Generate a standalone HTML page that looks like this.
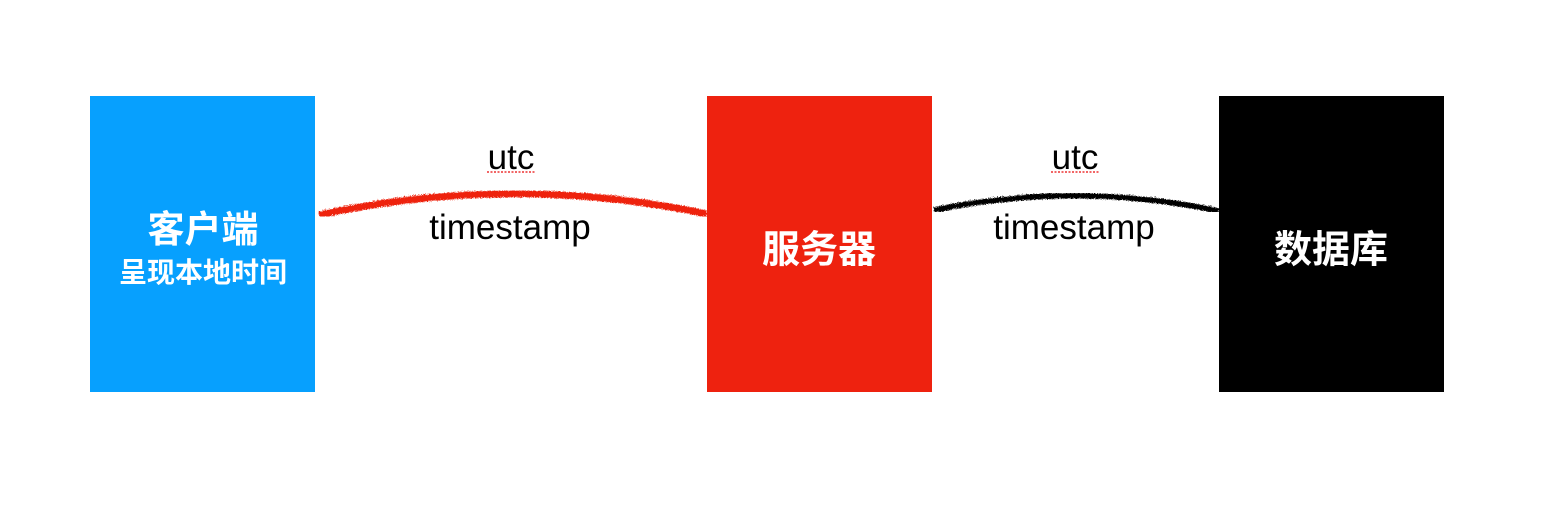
<!DOCTYPE html>
<html><head><meta charset="utf-8"><style>
body{margin:0;width:1542px;height:512px;background:#fff;position:relative;overflow:hidden;font-family:"Liberation Sans","Noto Sans CJK SC",sans-serif}
.b{position:absolute;top:96px;height:296px;width:225px}
.t{position:absolute;transform:translate(-50%,-50%);white-space:nowrap}
.w{color:#fff;font-weight:bold}
</style></head><body>
<div class="b" style="left:90px;background:#07a0fe"></div>
<div class="b" style="left:707px;background:#ee220f"></div>
<div class="b" style="left:1219px;background:#000"></div>
<svg style="position:absolute;left:0;top:0" width="1542" height="512">
<filter id="r"><feTurbulence baseFrequency="0.9" numOctaves="2" result="n"/><feDisplacementMap in="SourceGraphic" in2="n" scale="4"/></filter>
<path d="M318 214 Q510 172 706 213" stroke="#ee220f" stroke-width="7" fill="none" filter="url(#r)"/>
<path d="M933 209 Q1075 180 1218 210" stroke="#000" stroke-width="5.5" fill="none" filter="url(#r)"/>
<path d="M487 172 H535" stroke="#e33" stroke-width="1.5" stroke-dasharray="2 1.5"/>
<path d="M1051 172 H1099" stroke="#e33" stroke-width="1.5" stroke-dasharray="2 1.5"/>
</svg>
<div class="t w" style="left:203px;top:226px;font-size:37px">客户端</div>
<div class="t w" style="left:203px;top:271px;font-size:28px">呈现本地时间</div>
<div class="t w" style="left:819px;top:246px;font-size:38px">服务器</div>
<div class="t w" style="left:1331px;top:246px;font-size:38px">数据库</div>
<div class="t" style="left:511px;top:158px;font-size:35px">utc</div>
<div class="t" style="left:510px;top:228px;font-size:35px">timestamp</div>
<div class="t" style="left:1075px;top:158px;font-size:35px">utc</div>
<div class="t" style="left:1074px;top:228px;font-size:35px">timestamp</div>
</body></html>
